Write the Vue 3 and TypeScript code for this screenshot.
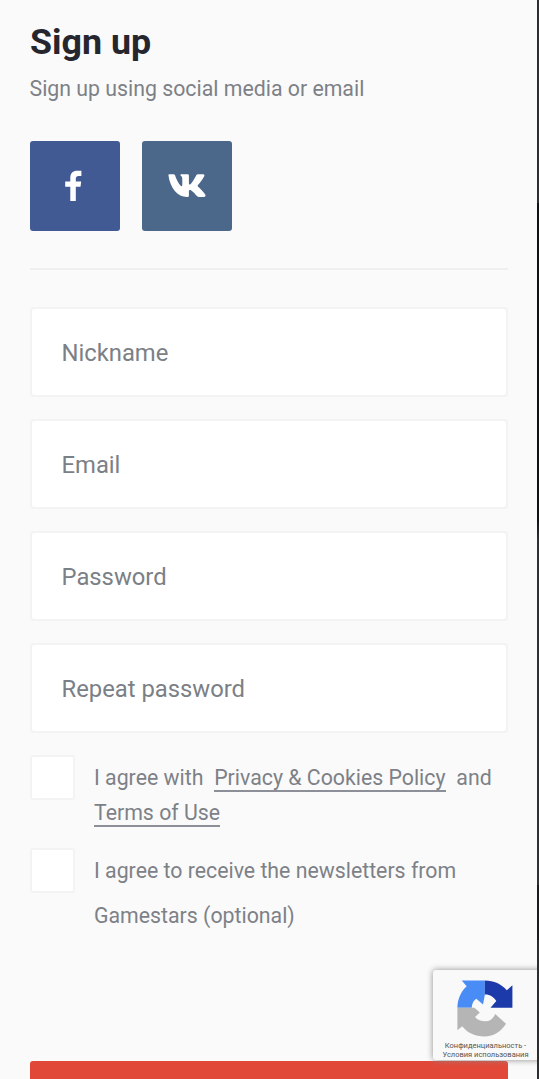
<script setup lang="ts">
import { ref } from 'vue'

interface Field {
  id: string
  label: string
  type: string
}

const fields: Field[] = [
  { id: 'nickname', label: 'Nickname', type: 'text' },
  { id: 'email', label: 'Email', type: 'email' },
  { id: 'password', label: 'Password', type: 'password' },
  { id: 'repeat', label: 'Repeat password', type: 'password' },
]
const values = ref<Record<string, string>>({ nickname: '', email: '', password: '', repeat: '' })
const policy = ref(false)
const newsletter = ref(false)
</script>

<template>
  <main class="page">
    <h1 class="title">Sign up</h1>
    <p class="subtitle">Sign up using social media or email</p>

    <div class="socials">
      <button class="social facebook" type="button" aria-label="Facebook">
        <svg width="90" height="90" viewBox="0 0 90 90">
          <path fill="#fff" d="M40.300 60V45.800h-5.100v-5.200h5.100v-3.700c0-4.800 2.600-7.100 6.900-7.100h4.200v5.100h-2.700c-2.100 0-2.900.8-2.900 2.600v3.100h5.400l-.7 5.200h-4.700V60z" />
        </svg>
      </button>
      <button class="social vk" type="button" aria-label="VK">
        <svg width="90" height="90" viewBox="0 0 90 90">
          <path fill="#fff" d="M26.400 34.300Q26.300 33.300 27.400 33.300H31.500Q32.600 33.300 33 34.300C34.400 38.400 36.300 42.200 38.400 44.600C39.500 45.800 40.300 45.300 40.300 43.800V38.200C40.300 35.800 39.400 35.300 38.500 34.600C38.200 33.900 38.600 33.300 39.500 33.300H45.700Q46.900 33.300 46.900 34.500V42.300C46.900 43.600 47.700 43.900 48.700 42.900C51 40.400 52.700 37.400 54.300 34.300Q54.800 33.300 56 33.300H61.200Q63 33.300 62.300 35C60.900 38.200 58.500 41.200 56.200 43.700C55.500 44.500 55.500 45 56.200 45.800C58.600 48.100 61.500 50.800 63.200 53.500C64 54.900 63.300 56 61.800 56H57Q55.800 56 55 55.100C53.300 53.300 51.300 50.600 49.300 49.400C47.700 48.500 46.900 49 46.900 50.600V54.500C46.900 55.700 46.300 56 45 56C35.500 56 28.200 47.200 26.400 34.300Z" />
        </svg>
      </button>
    </div>

    <hr class="divider" />

    <form class="form" @submit.prevent>
      <input
        v-for="f in fields"
        :key="f.id"
        v-model="values[f.id]"
        class="field"
        :type="f.type"
        :placeholder="f.label"
      />

      <div class="consent policy">
        <input v-model="policy" class="box" type="checkbox" aria-label="I agree" />
        <p class="legal">I agree with <a class="link spaced">Privacy &amp; Cookies Policy</a> and<br /><a class="link">Terms of Use</a></p>
      </div>
      <label class="consent news">
        <input v-model="newsletter" class="box" type="checkbox" />
        <span class="optional">I agree to receive the newsletters from<br />Gamestars (optional)</span>
      </label>

      <button class="submit" type="submit" aria-label="Submit"></button>
    </form>

    <aside class="captcha">
      <svg class="captcha-logo" width="57" height="57" viewBox="0 0 57 57">
        <path fill="#4a8cf5" d="M27.800 .4H4.700L9.700 6.200C4 11.300.5 19 .4 27.800H14.700C15 23.500 16.600 20.500 19.300 18.700L26 24.500L27.800 15z" />
        <path fill="#1c3aa9" d="M27.800 .4V14.500C33 14.300 36.500 17 39.300 21L33.500 27.800H55.400V5.300L49.800 10.200C44.500 4 37 .4 27.800 .4z" />
        <path fill="#b5b5b5" d="M.4 27.800V50.300L5.200 46.300C10.500 53 18 56.400 27.500 56.400C37 56.400 44 51.500 49 43.700L38.200 34C36 38.800 33 41.300 28.500 41.300C24 41.300 20.500 40 18 37L22.800 32.500L17.500 27.800z" />
      </svg>
      <div class="captcha-text">Конфиденциальность -<br />Условия использования</div>
    </aside>
    <div class="edge"></div>
  </main>
</template>

<style>
html,
body {
  margin: 0;
  overflow: hidden;
  background: #fafafa;
}
</style>

<style scoped>
.page {
  position: relative;
  box-sizing: border-box;
  width: 539px;
  height: 1079px;
  padding: 20px 31.500px 0 29.500px;
  overflow: hidden;
  background: #fafafa;
  color: #7d8187;
  font-family: Roboto, sans-serif;
}

.title {
  margin: 0 0 0 0.5px;
  color: #26262f;
  font-size: 35.800px;
  font-weight: 700;
  line-height: 44px;
}

.subtitle {
  margin: 10px 0 0;
  font-size: 21.300px;
  line-height: 30px;
}

.socials {
  display: flex;
  gap: 22px;
  margin-top: 37px;
}

.social {
  width: 90px;
  height: 90px;
  padding: 0;
  border: 0;
  border-radius: 3px;
}

.social svg {
  display: block;
}

.facebook {
  background: #415a93;
}

.vk {
  background: #4b678a;
}

.divider {
  height: 2px;
  margin: 37px 0;
  border: 0;
  background: #efefef;
}

.form {
  display: flex;
  flex-direction: column;
}

.field {
  box-sizing: border-box;
  width: 100%;
  height: 90px;
  margin: 0 0 22px;
  padding: 2px 30px 0;
  border: 2px solid #f3f3f3;
  border-radius: 4px;
  outline: 0;
  background: #fff;
  font-family: inherit;
  font-size: 23.800px;
}

.field::placeholder {
  color: #7b8086;
  opacity: 1;
}

.consent {
  display: flex;
  gap: 19.500px;
}

.box {
  flex: none;
  box-sizing: border-box;
  width: 45px;
  height: 45px;
  margin: 0;
  border: 2px solid #f3f3f3;
  border-radius: 3px;
  background: #fff;
  appearance: none;
}

.legal,
.optional {
  margin: 0;
  font-size: 21.300px;
  white-space: nowrap;
}

.legal {
  padding-top: 6px;
  line-height: 34.500px;
}

.optional {
  line-height: 45px;
}

.link {
  border-bottom: 2px solid #8d8f98;
}

.spaced {
  margin: 0 5.500px;
}

.news {
  margin-top: 18px;
}

.submit {
  height: 82px;
  margin-top: 123px;
  border: 0;
  border-radius: 3px;
  background: #e24838;
}

.captcha {
  position: absolute;
  top: 970px;
  left: 433px;
  width: 112px;
  height: 90px;
  border-radius: 3px;
  background: #f9f9f9;
  box-shadow: 0 0 6px #8c8c8c;
}

.captcha-logo {
  display: block;
  margin: 10px 0 0 24px;
}

.captcha-text {
  width: 105px;
  margin-top: 4px;
  color: #555;
  font-size: 7.500px;
  line-height: 9px;
  text-align: center;
  white-space: nowrap;
}

.edge {
  position: absolute;
  top: 0;
  right: 0;
  width: 2px;
  height: 100%;
  background: linear-gradient(#2b2f30 203px, #111215 203px 520px, #303133 540px 885px, #1b1b1d 885px 940px, #2c2d2f 940px);
}
</style>
